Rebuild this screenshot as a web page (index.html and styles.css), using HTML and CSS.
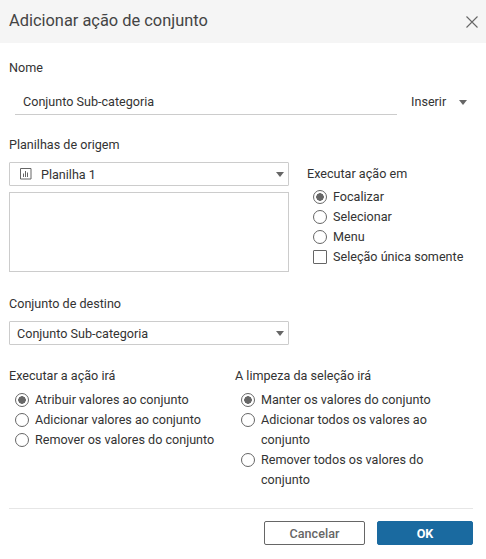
FILE: index.html
```html
<!DOCTYPE html>
<html lang="pt">
<head>
<meta charset="utf-8">
<title>Adicionar ação de conjunto</title>
<link rel="stylesheet" href="styles.css">
</head>
<body>
<div class="dialog">
  <header class="header">
    <h1 class="title">Adicionar ação de conjunto</h1>
    <svg class="close" width="14" height="14" viewBox="0 0 14 14"><path d="M1.500 1.500L12.500 12.500M12.500 1.500L1.500 12.500" stroke="#666" stroke-width="1.1" fill="none"/></svg>
  </header>
  <main class="body">
    <div class="label name-label">Nome</div>
    <div class="name-row">
      <div class="name-input">Conjunto Sub-categoria</div>
      <div class="insert">Inserir<span class="caret insert-caret"></span></div>
    </div>
    <div class="label origin-label">Planilhas de origem</div>
    <div class="origin">
      <div class="origin-left">
        <div class="select">
          <svg class="sheet-icon" width="12" height="12" viewBox="0 0 12 12"><path d="M.5.5h10.500v10.500H.5z" fill="none" stroke="#666"/><path d="M3.500 5.500v3.500M5.500 3v6M7.500 4.500v4.500" stroke="#666" fill="none"/></svg>
          <span class="select-text">Planilha 1</span><span class="caret"></span>
        </div>
        <div class="listbox"></div>
      </div>
      <div class="origin-right">
        <div class="text-line">Executar ação em</div>
        <div class="options">
          <div class="option"><span class="radio on"></span>Focalizar</div>
          <div class="option"><span class="radio"></span>Selecionar</div>
          <div class="option"><span class="radio"></span>Menu</div>
          <div class="option"><span class="check"></span>Seleção única somente</div>
        </div>
      </div>
    </div>
    <div class="label target-label">Conjunto de destino</div>
    <div class="select target-select"><span class="select-text">Conjunto Sub-categoria</span><span class="caret"></span></div>
    <div class="behaviors">
      <div class="behavior-a">
        <div class="text-line">Executar a ação irá</div>
        <div class="options">
          <div class="option"><span class="radio on"></span>Atribuir valores ao conjunto</div>
          <div class="option"><span class="radio"></span>Adicionar valores ao conjunto</div>
          <div class="option"><span class="radio"></span>Remover os valores do conjunto</div>
        </div>
      </div>
      <div class="behavior-b">
        <div class="text-line">A limpeza da seleção irá</div>
        <div class="options">
          <div class="option"><span class="radio on"></span>Manter os valores do conjunto</div>
          <div class="option"><span class="radio"></span><span>Adicionar todos os valores ao conjunto</span></div>
          <div class="option"><span class="radio"></span><span>Remover todos os valores do conjunto</span></div>
        </div>
      </div>
    </div>
    <footer class="footer">
      <button class="btn cancel">Cancelar</button>
      <button class="btn ok">OK</button>
    </footer>
  </main>
</div>
</body>
</html>
```
FILE: styles.css
```css
* { box-sizing: border-box; }
html, body { margin: 0; padding: 0; background: #fff; }
body { width: 486px; height: 559px; overflow: hidden; font-family: Roboto, "Liberation Sans", sans-serif; font-size: 12.6px; color: #333; }
.dialog { display: flex; flex-direction: column; height: 559px; }
.header { height: 43px; background: #f5f5f5; display: flex; align-items: center; justify-content: space-between; padding: 0 7px 0 9px; }
.title { margin: 0 0 2px; font-size: 16.400px; font-weight: 400; color: #444; }
.close { display: block; }
.body { padding: 0 13px 0 9px; display: flex; flex-direction: column; }
.label, .text-line { height: 20px; line-height: 20px; color: #333; }
.name-label { margin-top: 15px; }
.name-row { display: flex; margin-top: 13px; padding-left: 6px; height: 24px; }
.name-input { width: 382px; height: 24px; line-height: 22px; padding-left: 8px; border-bottom: 1px solid #ccc; }
.insert { margin-left: 14px; line-height: 22px; display: flex; align-items: center; height: 22px; }
.insert-caret { margin-left: 13px; margin-right: 0; }
.origin-label { margin-top: 20px; }
.origin { display: flex; margin-top: 7px; }
.origin-left { width: 280px; }
.origin-right { margin-left: 18px; padding-top: 2px; }
.select { height: 24px; border: 1px solid #ccc; border-radius: 1px; display: flex; align-items: center; padding: 0 4px 0 10px; }
.sheet-icon { flex: none; margin-right: 9px; }
.select-text { flex: 1; }
.caret { width: 0; height: 0; border-left: 4px solid transparent; border-right: 4px solid transparent; border-top: 5px solid #666; flex: none; }
.listbox { height: 80px; margin-top: 6px; border: 1px solid #ccc; }
.options { margin-top: 3px; padding-left: 6px; }
.behaviors .options { margin-top: 4px; }
.option { display: flex; line-height: 20px; }
.radio { flex: none; width: 14px; height: 14px; margin: 3px 6px 0 0; border: 1px solid #666; border-radius: 50%; background: #fff; }
.radio.on { background: radial-gradient(circle, #666 0, #666 3.500px, #fff 4px); }
.check { flex: none; width: 14px; height: 14px; margin: 3px 6px 0 0; border: 1px solid #666; border-radius: 1px; }
.target-label { margin-top: 22px; }
.target-select { width: 280px; margin-top: 7px; padding-left: 7px; }
.behaviors { display: flex; margin-top: 21px; }
.behavior-a { width: 226px; }
.behavior-b { width: 238px; }
.footer { display: flex; justify-content: flex-end; gap: 12px; border-top: 1px solid #e6e6e6; margin-top: 18px; padding-top: 12px; }
.btn { height: 24px; font: 500 12.6px Roboto, "Liberation Sans", sans-serif; border-radius: 2px; padding: 0; }
.cancel { width: 101px; background: #fff; border: 1px solid #666; color: #666; }
.ok { width: 96px; background: #1a6aa0; border: 1px solid #1a6aa0; color: #fff; font-weight: 700; }
```
